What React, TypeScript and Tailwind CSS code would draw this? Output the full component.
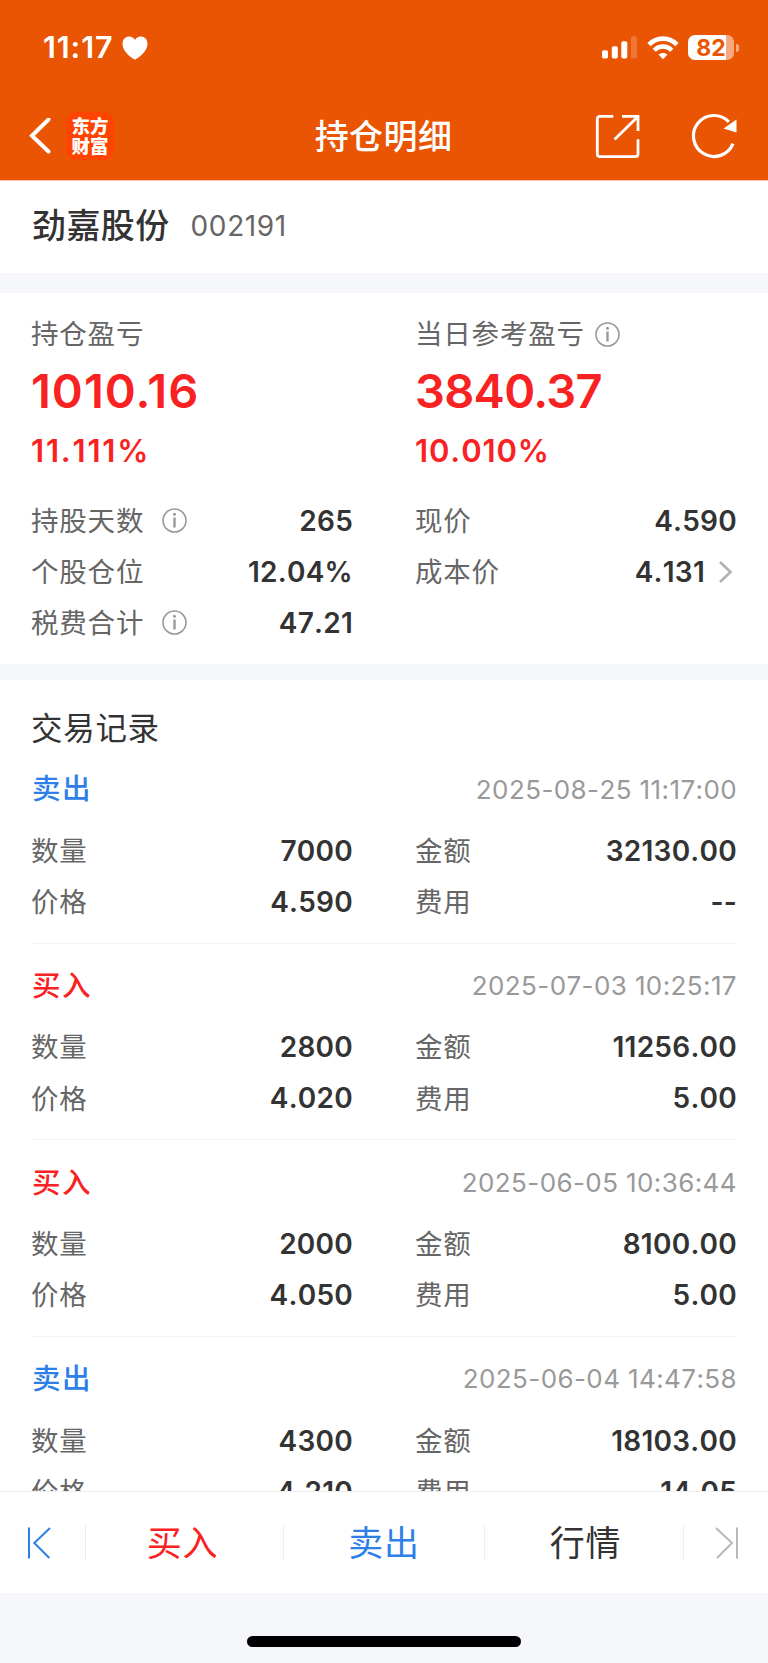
import React from 'react';
import clsx from 'clsx';

interface TradeRecord {
  id: number;
  side: 'buy' | 'sell';
  time: string;
  quantity: string;
  amount: string;
  price: string;
  fee: string;
}

const records: TradeRecord[] = [
  { id: 1, side: 'sell', time: '2025-08-25 11:17:00', quantity: '7000', amount: '32130.00', price: '4.590', fee: '--' },
  { id: 2, side: 'buy', time: '2025-07-03 10:25:17', quantity: '2800', amount: '11256.00', price: '4.020', fee: '5.00' },
  { id: 3, side: 'buy', time: '2025-06-05 10:36:44', quantity: '2000', amount: '8100.00', price: '4.050', fee: '5.00' },
  { id: 4, side: 'sell', time: '2025-06-04 14:47:58', quantity: '4300', amount: '18103.00', price: '4.210', fee: '14.05' },
];

function InfoIcon({ className }: { className?: string }) {
  return (
    <svg className={clsx('shrink-0', className)} width="25" height="25" viewBox="0 0 25 25" fill="none">
      <circle cx="12.5" cy="12.5" r="11.5" stroke="#999" strokeWidth="1.6" />
      <circle cx="12.5" cy="6.3" r="1.5" fill="#999" />
      <path d="M12.5 9.5v10" stroke="#999" strokeWidth="2.4" />
    </svg>
  );
}

function StatusBar() {
  return (
    <div className="flex h-[92px] items-center justify-between pt-[3px] pr-[29px] pl-[43px]">
      <div className="flex items-center gap-[8px]">
        <span className="text-[30.5px] font-semibold leading-none tracking-[0.9px]">11:17</span>
        <svg width="26" height="24" viewBox="0 0 26 24" fill="#fff">
          <path d="M13 23.6C12 23.6 .5 16.5 .5 7.8C.5 3.6 3.4 .6 7.1 .6C9.7 .6 11.9 1.9 13 4.1C14.1 1.9 16.3 .6 18.9 .6C22.6 .6 25.5 3.6 25.5 7.8C25.5 16.5 14 23.6 13 23.6Z" />
        </svg>
      </div>
      <div className="flex items-center">
        <svg width="35" height="23" viewBox="0 0 35 23" fill="#fff">
          <rect x="0" y="14.2" width="6" height="8.3" rx="1.8" />
          <rect x="9.8" y="10.2" width="6" height="12.3" rx="1.8" />
          <rect x="19.3" y="5.2" width="6" height="17.3" rx="1.8" />
          <rect x="29" y=".3" width="6" height="22.2" rx="1.8" opacity=".2" />
        </svg>
        <svg className="ml-[10px]" width="32" height="24" viewBox="0 0 32 24" fill="none" stroke="#fff">
          <path d="M2 8.6C9.7 .6 22.3 .6 30 8.6" strokeWidth="4.6" />
          <path d="M7.2 14.2C12.1 9.2 19.9 9.2 24.8 14.2" strokeWidth="4.4" />
          <path d="M16 23.3L11.5 18.6C14 16.3 18 16.3 20.5 18.6Z" fill="#fff" stroke="none" />
        </svg>
        <div className="ml-[9px] flex items-center">
          <div className="flex h-[25px] w-[46px] items-center justify-center rounded-[7px] bg-linear-to-r from-white from-82% to-[#f5a981] to-82% pt-px text-[23px] font-bold leading-[24px] text-[#ea5504]">
            82
          </div>
          <div className="ml-[2px] h-[8px] w-[3px] rounded-r-full bg-[#f5a981]" />
        </div>
      </div>
    </div>
  );
}

function NavBar() {
  return (
    <div className="grid h-[88px] grid-cols-[1fr_auto_1fr] items-center pr-[31px] pl-[29px]">
      <div className="flex items-center">
        <svg width="22" height="36" viewBox="0 0 22 36" fill="none">
          <path d="M19.5 1.5L3 17.7L19.5 33.5" stroke="#fff" strokeWidth="4" strokeLinecap="round" />
        </svg>
        <div className="ml-[15px] flex h-[48px] w-[48px] flex-col items-center justify-center rounded-[10px] bg-[#ff4400] pb-px text-[18.5px] font-black leading-[20px]">
          <span>东方</span>
          <span>财富</span>
        </div>
      </div>
      <h1 className="pt-[2px] pl-px text-[34px] font-medium leading-none tracking-[0.4px]">持仓明细</h1>
      <div className="flex items-center justify-end gap-[51px]">
        <svg width="45" height="46" viewBox="0 0 45 46" fill="none" stroke="#fff" strokeWidth="2.8">
          <path d="M18.3 3.3H5a2.7 2.7 0 0 0-2.7 2.7v35a2.7 2.7 0 0 0 2.7 2.7h35.3a2.7 2.7 0 0 0 2.7-2.7V26.3" />
          <path d="M27 3.3h16V18M42.5 4L19.5 26.5" />
        </svg>
        <svg width="46" height="46" viewBox="0 0 46 46" fill="none">
          <path d="M42 30.7A20.5 20.5 0 1 1 37.8 8.8" stroke="#fff" strokeWidth="3.2" />
          <path d="M45.5 6.5v13L32.5 15.5Z" fill="#fff" />
        </svg>
      </div>
    </div>
  );
}

interface StatProps {
  label: string;
  value: string;
  info?: boolean;
  arrow?: boolean;
}

function Stat({ label, value, info, arrow }: StatProps) {
  return (
    <div className="flex h-[51.2px] items-center">
      <span className="pt-[1.5px] text-[27.5px] tracking-[0.8px] text-[#666]">{label}</span>
      {info && <InfoIcon className="ml-[18px]" />}
      <span className="ml-auto text-[28px] font-semibold tracking-[0.25px] text-[#333] [font-kerning:none]">{value}</span>
      {arrow && (
        <svg className="mr-[4px] ml-[13px]" width="15" height="24" viewBox="0 0 15 24" fill="none">
          <path d="M2 2L12.5 12L2 22" stroke="#b2b2b2" strokeWidth="2.6" />
        </svg>
      )}
    </div>
  );
}

interface ProfitProps {
  label: string;
  value: string;
  percent: string;
  info?: boolean;
  valueClass: string;
  percentClass: string;
}

function Profit({ label, value, percent, info, valueClass, percentClass }: ProfitProps) {
  return (
    <div>
      <div className="flex h-[40px] items-center">
        <span className="pt-[2px] text-[27.5px] tracking-[0.8px] text-[#666]">{label}</span>
        {info && <InfoIcon className="ml-[10px]" />}
      </div>
      <div className={clsx('h-[74px] text-[47px] font-semibold leading-[74px] text-[#f82222]', valueClass)}>{value}</div>
      <div className={clsx('h-[44px] pt-px text-[31px] font-semibold leading-[44px] text-[#f82222] [font-kerning:none]', percentClass)}>
        {percent}
      </div>
    </div>
  );
}

function Record({ record }: { record: TradeRecord }) {
  const isBuy = record.side === 'buy';
  return (
    <li className="h-[196.67px] border-b border-[#f2f2f2] pt-[22px]">
      <div className="flex h-[40px] items-center justify-between">
        <span className={clsx('pt-[1.5px] pl-px text-[28.5px] font-medium tracking-[1.5px]', isBuy ? 'text-[#f82222]' : 'text-[#2e80e8]')}>
          {isBuy ? '买入' : '卖出'}
        </span>
        <span className="text-[26px] tracking-[0.4px] text-[#999] [font-kerning:none]">{record.time}</span>
      </div>
      <div className="mt-4 grid grid-cols-2 gap-x-[62px]">
        <Stat label="数量" value={record.quantity} />
        <Stat label="金额" value={record.amount} />
        <Stat label="价格" value={record.price} />
        <Stat label="费用" value={record.fee} />
      </div>
    </li>
  );
}

export default function App() {
  return (
    <div className="flex h-[1663px] w-[768px] flex-col overflow-hidden bg-[#f6f7fa] font-['Inter','Noto_Sans_CJK_SC',sans-serif]">
      <header className="h-[181px] shrink-0 border-b border-[#fbc4a8] bg-[#ea5504] text-white">
        <StatusBar />
        <NavBar />
      </header>

      <main className="min-h-0 flex-1 overflow-hidden">
        <section className="flex h-[91.5px] items-center bg-white px-[31px] pb-px">
          <h2 className="pl-px text-[34px] font-medium leading-none tracking-[0.4px] text-[#333]">劲嘉股份</h2>
          <span className="ml-[21px] text-[28px] leading-none tracking-[0.6px] text-[#666]">002191</span>
        </section>

        <section className="mt-[20.5px] h-[370.5px] bg-white px-[31px] pt-[21px]">
          <div className="grid grid-cols-2 gap-x-[62px]">
            <Profit
              label="持仓盈亏"
              value="1010.16"
              percent="11.111%"
              valueClass="tracking-[1px]"
              percentClass="tracking-[1.8px]"
            />
            <Profit
              label="当日参考盈亏"
              value="3840.37"
              percent="10.010%"
              valueClass="tracking-[-0.7px]"
              percentClass="tracking-[0.9px]"
              info
            />
          </div>
          <div className="mt-[23px] grid grid-cols-2 gap-x-[62px]">
            <Stat label="持股天数" value="265" info />
            <Stat label="现价" value="4.590" />
            <Stat label="个股仓位" value="12.04%" />
            <Stat label="成本价" value="4.131" arrow />
            <Stat label="税费合计" value="47.21" info />
          </div>
        </section>

        <section className="mt-[16.5px] bg-white px-[31px]">
          <h3 className="h-[67px] pt-[28.5px] text-[31.5px] leading-[40px] tracking-[0.7px] text-[#333]">交易记录</h3>
          <ul>
            {records.map((record) => (
              <Record key={record.id} record={record} />
            ))}
          </ul>
        </section>
      </main>

      <footer className="shrink-0">
        <nav className="flex h-[102px] items-center border-t border-[#eee] bg-white text-[35px] tracking-[0.7px]">
          <button className="flex w-[85px] justify-start pl-[27px]">
            <svg width="24" height="32" viewBox="0 0 24 32" fill="none" stroke="#2e80e8" strokeWidth="2">
              <path d="M2 .5v31M23 1L7.3 16L22.3 31" />
            </svg>
          </button>
          <button className="h-[35px] w-[198px] border-l border-[#eee] pr-[4px] leading-[37px] text-[#f82222]">买入</button>
          <button className="h-[35px] w-[202px] border-x border-[#eee] leading-[37px] text-[#2e80e8]">卖出</button>
          <button className="h-[35px] flex-1 border-r border-[#eee] pl-[3px] leading-[37px] text-[#333]">行情</button>
          <button className="flex w-[84px] justify-end pr-[29px]">
            <svg width="24" height="32" viewBox="0 0 24 32" fill="none" stroke="#b8b8b8" strokeWidth="2">
              <path d="M22 .5v31M1 1L17 16L2 31" />
            </svg>
          </button>
        </nav>
        <div className="flex h-[70px] items-end justify-center pb-[16px]">
          <div className="h-[11px] w-[274px] rounded-full bg-black" />
        </div>
      </footer>
    </div>
  );
}
